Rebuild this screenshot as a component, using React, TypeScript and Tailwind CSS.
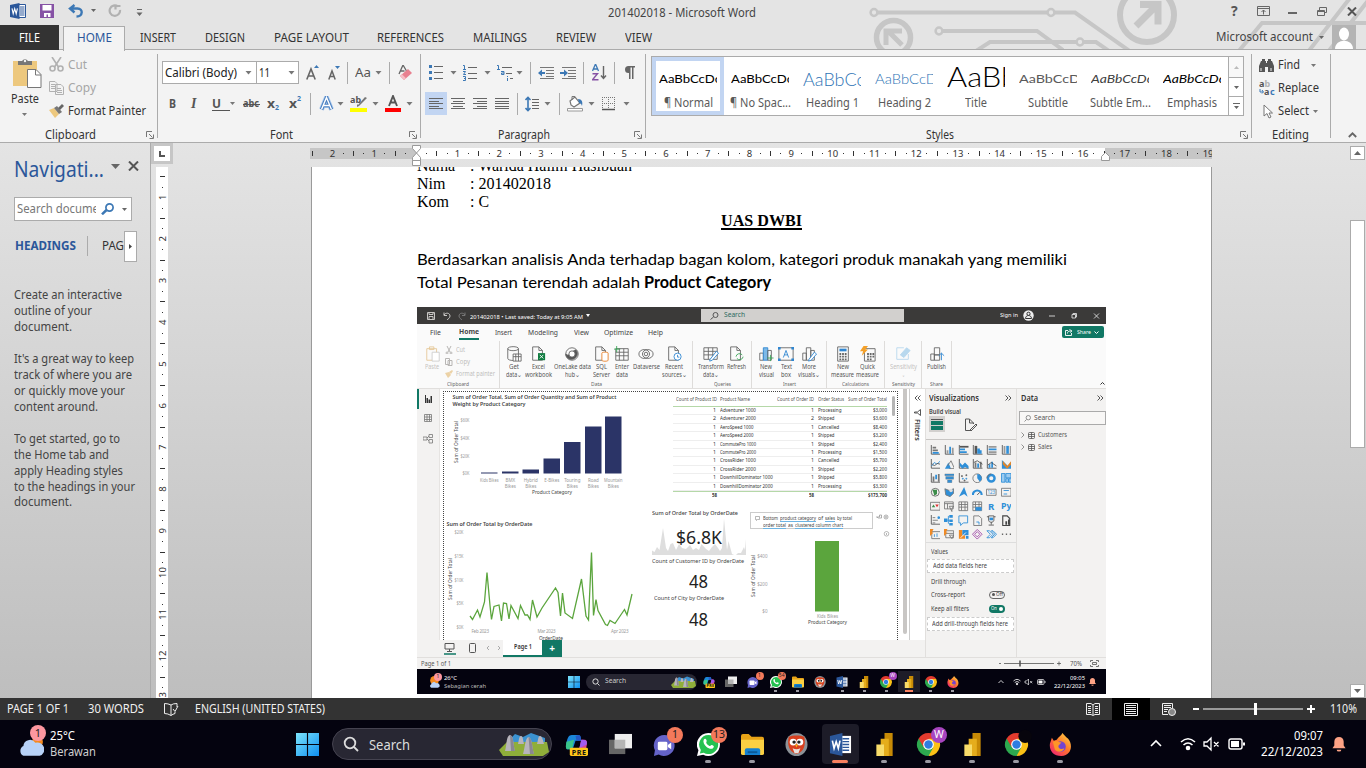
import { useLayoutEffect, useRef } from "react";
import type { ReactNode } from "react";

/* Text squeezed or stretched horizontally to a given advance width. */
function T({ w, className = "", children }: { w: number; className?: string; children: ReactNode }) {
  const inner = useRef<HTMLSpanElement>(null);
  useLayoutEffect(() => {
    const el = inner.current;
    if (!el) return;
    el.style.transform = "none";
    const natural = el.getBoundingClientRect().width;
    if (natural > 0) el.style.transform = `scaleX(${w / natural})`;
  }, [w, children]);
  return (
    <span className={`inline-block shrink-0 whitespace-nowrap ${className}`} style={{ width: w }}>
      <span ref={inner} className="inline-block origin-left">
        {children}
      </span>
    </span>
  );
}

const Caret = ({ c = "#777" }: { c?: string }) => (
  <svg width="7" height="4" viewBox="0 0 7 4" className="shrink-0">
    <path d="M0.5 0h6L3.5 3.6z" fill={c} />
  </svg>
);
const Sep = () => <div className="h-[22px] w-px bg-[#ababab]" />;

/* ---------- Title bar and tabs ---------- */

function Circuit() {
  return (
    <svg className="absolute left-[866px] top-0" width="500" height="49" viewBox="866 0 500 49" fill="none" stroke="#c6c6c6" strokeWidth="4">
      <circle cx="874" cy="12.5" r="3.4" strokeWidth="2.5" />
      <path d="M878 12.5h169M1055 12.5h20L1131 52" />
      <circle cx="1051" cy="12.5" r="3.4" strokeWidth="2.5" />
      <circle cx="939" cy="31" r="3.4" strokeWidth="2.5" />
      <path d="M943 31h94l26 19M976 51l14-9h86M1084 42h12l13 9" />
      <circle cx="1080" cy="42" r="3.4" strokeWidth="2.5" />
      <circle cx="893.5" cy="37.5" r="17" strokeWidth="5.5" />
      <path d="M902 45l-14-14M886 45V31h16" strokeWidth="5" />
      <circle cx="1147" cy="15" r="27" strokeWidth="6" />
      <path d="M1136 26l20-20M1140 4.5h18v20" strokeWidth="7" />
      <path d="M1238 52l24-29h104M1308 52l42-54M1328 52l42-54" />
    </svg>
  );
}

function WordLogo({ size }: { size: number }) {
  return (
    <svg width={size} height={size} viewBox="0 0 16 16">
      <path d="M8 1.5h7.500v13H8z" fill="#fff" stroke="#2b579a" strokeWidth="1" />
      <path d="M10 4h4.5M10 6h4.5M10 8h4.5M10 10h4.5M10 12h4.5" stroke="#2b579a" strokeWidth="1" />
      <path d="M0 2l9.5-2v16L0 14z" fill="#2b579a" />
      <path d="M2 5.3l1.2 5.4 1.5-5 1.5 5 1.2-5.4" stroke="#fff" strokeWidth="1.1" fill="none" />
    </svg>
  );
}

function TitleBar() {
  return (
    <div className="flex h-[25px] items-center">
      <div className="ml-[10px] flex w-[30px] pb-[3px]"><WordLogo size={16} /></div>
      <div className="flex w-[28px] pb-[3px]">
        <svg width="14" height="14" viewBox="0 0 14 14"><path d="M0 0h14v14H0z" fill="#8652a5" /><path d="M2.5 1h9v5.5h-9zM4 9h6.5v4H8v-2.500H6.500V13H4z" fill="#fff" /></svg>
      </div>
      <div className="flex w-[23px] pb-[3px]">
        <svg width="16" height="14" viewBox="0 0 16 14" fill="none" stroke="#3c78b5" strokeWidth="2.4"><path d="M6.500 1L2 4.500l4.500 4M2 4.500h7.500c6 0 5.500 8-1 8" /></svg>
      </div>
      <div className="w-[17px] pb-[5px]"><svg width="5" height="3"><path d="M0 0h5L2.500 3z" fill="#666" /></svg></div>
      <div className="flex w-[28px] pb-[3px]">
        <svg width="14" height="14" viewBox="0 0 14 14" fill="none" stroke="#b1b1b1" strokeWidth="2.200"><path d="M10 2.500A5.200 5.200 0 1 0 12 6M7.500 1v4.500M8 2h4.500" /></svg>
      </div>
      <svg width="7" height="7" viewBox="0 0 7 7"><path d="M1 0h5v1H1zM0.500 3.500h6L3.500 7z" fill="#666" /></svg>
      <div className="ml-[465px] text-[12px] text-[#444]"><T w={148}>201402018 - Microsoft Word</T></div>
      <div className="ml-[475px] flex items-center pb-[3px]">
        <div className="w-[26px] text-[14px] font-bold leading-none text-[#555]">?</div>
        <svg className="mr-[18px]" width="13" height="10" viewBox="0 0 13 10" fill="none" stroke="#666"><path d="M.5.5h12v9H.5zM.5 2.500h12M6.500 8.500V4M4.500 6l2-2 2 2" /></svg>
        <div className="mr-[20px] mt-[3px] h-[2px] w-[9px] bg-[#666]" />
        <svg className="mr-[20px]" width="10" height="9" viewBox="0 0 10 9" fill="none" stroke="#666"><path d="M.5 3.500h7v5h-7zM2.500 3V.5h7v5H8M.5 4.500h7" /></svg>
        <svg width="10" height="9" viewBox="0 0 10 9" stroke="#555" strokeWidth="2"><path d="M1 .5l8 8M9 .5l-8 8" /></svg>
      </div>
    </div>
  );
}

const ribbonTabs: [string, number, string][] = [
  ["INSERT", 36, "ml-[15px] pt-px"],
  ["DESIGN", 40, "ml-[29px] pt-px"],
  ["PAGE LAYOUT", 75, "ml-[29px] pt-px"],
  ["REFERENCES", 67, "ml-[28px] pt-px"],
  ["MAILINGS", 54, "ml-[29px] pt-px"],
  ["REVIEW", 40, "ml-[29px] pt-px"],
  ["VIEW", 27, "ml-[29px] pt-px"],
];

function Tabs() {
  return (
    <div className="flex h-[25px] items-center border-b border-[#ababab] text-[12px] text-[#333]">
      <div className="flex h-[25px] w-[59px] items-center justify-center bg-[#333] pt-px text-white"><T w={21}>FILE</T></div>
      <div className="relative top-px ml-[4px] flex h-[25px] w-[62px] items-center justify-center border border-b-0 border-[#ababab] bg-[#f3f3f3] text-[#2b579a]"><T w={35} className="-mt-px">HOME</T></div>
      {ribbonTabs.map(([label, w, m]) => <div key={label} className={m}><T w={w}>{label}</T></div>)}
      <div className="ml-[564px] mr-[6px] text-[#444]"><T w={97}>Microsoft account</T></div>
      <svg width="5" height="3"><path d="M0 0h5L2.500 3z" fill="#666" /></svg>
      <svg className="ml-[8px]" width="24" height="24" viewBox="0 0 24 24"><path d="M0 0h24v24H0z" fill="#b4b4b4" /><ellipse cx="12" cy="9" rx="5" ry="6.500" fill="#fff" /><path d="M3 24c0-11 18-11 18 0z" fill="#fff" /></svg>
    </div>
  );
}

/* ---------- Ribbon ---------- */

function Launcher() {
  return (
    <svg width="8" height="8" viewBox="0 0 8 8" fill="none" stroke="#777"><path d="M.5 6V.5H6M3 3l3.500 3.500M7.500 3.500v4h-4" /></svg>
  );
}

function Group({ width, label, lw, pad, launcher, children }: { width: string; label: string; lw: number; pad: string; launcher?: boolean; children: ReactNode }) {
  return (
    <div className={`flex h-[92px] shrink-0 ${width}`}>
      <div className="flex min-w-0 grow flex-col">
        <div className="h-[76px]">{children}</div>
        <div className="flex h-[16px] items-center text-[12px] text-[#333]">
          <div className={`${pad} grow pt-px`}><T w={lw}>{label}</T></div>
          {launcher && <div className="mr-[3px] mt-[2px]"><Launcher /></div>}
        </div>
      </div>
      <div className="mt-[4px] h-[84px] w-px bg-[#ababab]" />
    </div>
  );
}

function Clipboard() {
  return (
    <Group width="w-[158px]" label="Clipboard" lw={51} pad="pl-[45px]" launcher>
      <div className="flex">
        <div className="flex w-[49px] flex-col items-start pt-[8px]">
          <svg className="ml-[13px]" width="29" height="31" viewBox="0 0 29 31">
            <path d="M0 3h24v25H0z" fill="#edc87e" /><path d="M5 3h4a3.500 3.500 0 0 1 6 0h4v4H5z" fill="#777" /><circle cx="12" cy="3" r="1.200" fill="#f3f3f3" />
            <path d="M14.500 11.500h8.500l5 5v13H14.500z" fill="#fff" stroke="#777" /><path d="M22.500 11.500v5.500H28" fill="none" stroke="#777" />
          </svg>
          <div className="ml-[11px] mt-px text-[12px] leading-[18px] text-[#333]"><T w={28}>Paste</T></div>
          <svg className="ml-[22px] mt-[5px]" width="5" height="3"><path d="M0 0h5L2.500 3z" fill="#777" /></svg>
        </div>
        <div className="pt-[3px] text-[12px] text-[#a6a6a6]">
          <div className="flex h-[23px] items-center">
            <svg className="mr-[4px]" width="15" height="15" viewBox="0 0 15 15" fill="none" stroke="#b1b1b1" strokeWidth="1.600"><path d="M3 0l6.500 10M12 0L5.500 10" /><circle cx="3.500" cy="11.500" r="2.500" /><circle cx="11.500" cy="11.500" r="2.500" /></svg>
            <T w={19}>Cut</T>
          </div>
          <div className="flex h-[23px] items-center">
            <svg className="mr-[4px]" width="15" height="14" viewBox="0 0 15 14" fill="#f3f3f3" stroke="#b1b1b1"><path d="M.5.5H6l2 2v8H.5zM2 3.500h4M2 5.500h4M2 7.500h4M6.500 3.500H12l2.500 2.500v7.500h-8zM8 7.500h4M8 9.500h5M8 11.500h5" /></svg>
            <T w={28}>Copy</T>
          </div>
          <div className="flex h-[23px] items-center text-[#333]">
            <svg className="mr-[4px]" width="15" height="14" viewBox="0 0 15 14"><path d="M0 6l5-2 5 6-4 4z" fill="#edc87e" /><path d="M5 4l3-2 5 6-3 2z" fill="#777" /><path d="M9 4l4-4 2 2-4 4z" fill="#666" /></svg>
            <T w={78}>Format Painter</T>
          </div>
        </div>
      </div>
    </Group>
  );
}

function FontGroup() {
  return (
    <Group width="w-[263px]" label="Font" lw={23} pad="pl-[112px]" launcher>
      <div className="pt-[11px] text-[#555]">
        <div className="ml-[4px] grid h-[23px] grid-cols-[94px_50px_22px_19px_8px_20px_14px_8px_16px] items-center">
          <div className="flex h-[23px] w-[95px] items-center justify-between border border-[#ababab] bg-white pl-[2px] pr-[4px] text-[12px] text-[#222]"><T w={72}>Calibri (Body)</T><Caret /></div>
          <div className="flex h-[23px] w-[43px] items-center justify-between border border-[#ababab] bg-white pl-[2px] pr-[3px] text-[12px] text-[#222]"><T w={11}>11</T><Caret /></div>
          <svg width="14" height="16" viewBox="0 0 14 16"><path d="M.8 14.500L5 4l4.200 10.500M2.300 11h5.400" fill="none" stroke="#666" strokeWidth="1.600" /><path d="M8 3h5l-2.500-3z" fill="#3c78b5" /></svg>
          <svg width="13" height="16" viewBox="0 0 13 16"><path d="M.8 14.500L4 6l3.200 8.500M2 11.500h4" fill="none" stroke="#666" strokeWidth="1.500" /><path d="M7 1h5L9.500 4z" fill="#3c78b5" /></svg>
          <Sep />
          <div className="text-[13px]"><T w={16}>Aa</T></div>
          <Caret />
          <Sep />
          <svg width="16" height="16" viewBox="0 0 16 16"><path d="M2 9L6 0l3.500 6M3.500 6h4" fill="none" stroke="#666" strokeWidth="1.300" /><path d="M3 11l8-7 4 4-8 7z" fill="#e8808f" /><path d="M3 11l2-1.700 4 4L7 15z" fill="#f6bcc4" /></svg>
        </div>
        <div className="ml-[11px] mt-[8px] grid h-[23px] grid-cols-[22px_21px_18px_13px_24px_22px_21px_9px_18px_13px_22px_13px_21px_8px] items-center text-[13px] font-bold">
          <T w={7}>B</T>
          <span className="font-['Liberation_Serif'] text-[14px] italic">I</span>
          <span className="border-b border-[#555] pb-px leading-[12px]"><T w={9}>U</T></span>
          <svg width="5" height="3"><path d="M0 0h5L2.500 3z" fill="#777" /></svg>
          <span className="relative text-[11px]"><T w={16}>abc</T><span className="absolute left-0 top-[9px] h-px w-[17px] bg-[#555]" /></span>
          <span className="flex items-end"><T w={8}>x</T><span className="text-[7px] leading-[10px] text-[#3c78b5]">2</span></span>
          <span className="flex items-start"><T w={8}>x</T><span className="text-[7px] leading-[10px] text-[#3c78b5]">2</span></span>
          <Sep />
          <svg width="15" height="15" viewBox="0 0 15 15"><path d="M2.500 13.500L7.500 1.500 12.500 13.500M4.500 9.500h6" fill="none" stroke="#a9c8ec" strokeWidth="5" /><path d="M2.500 13.500L7.500 1.500 12.500 13.500M4.500 9.500h6" fill="none" stroke="#4a7fc0" strokeWidth="3.400" /><path d="M2.500 13.500L7.500 1.500 12.500 13.500M4.500 9.500h6" fill="none" stroke="#fff" strokeWidth="1.400" /></svg>
          <Caret />
          <svg width="18" height="17" viewBox="0 0 18 17"><text x="0" y="8" fontSize="9" fontWeight="700" fill="#555" fontFamily="Noto Sans">ab</text><path d="M8 10l7-8 2 1-8 8zM7 9l2 2-2 1z" fill="#777" /><path d="M0 13h17v4H0z" fill="#ff0" /></svg>
          <Caret />
          <svg width="16" height="17" viewBox="0 0 16 17"><path d="M4 11L8 1l4 10M5.500 7.500h5" fill="none" stroke="#555" strokeWidth="1.900" /><path d="M0 13h16v4H0z" fill="#f00" /></svg>
          <Caret />
        </div>
      </div>
    </Group>
  );
}

function Lines({ mode }: { mode: "l" | "c" | "r" | "j" }) {
  const short = mode === "j" ? 14 : 10;
  const x = mode === "c" ? 2 : mode === "r" ? 4 : 0;
  return (
    <svg width="14" height="11" viewBox="0 0 14 11" fill="#666" shapeRendering="crispEdges">
      <path d="M0 0h14v1H0zM0 5h14v1H0z" />
      <rect x={x} y="2.500" width={short} height="1" />
      <rect x={x} y="7.500" width={short} height="1" />
      <rect x="0" y="10" width="14" height="1" />
    </svg>
  );
}

function Indent({ flip }: { flip?: boolean }) {
  return (
    <svg width="16" height="12" viewBox="0 0 16 12">
      <path d="M2 .5h14M8 3.500h8M8 6.500h8M8 9.500h8M2 11.500h14" stroke="#777" />
      <path d={flip ? "M0 5h4V2.500L8 6 4 9.500V7H0z" : "M7 5H4V2.500L0 6l4 3.500V7h3z"} fill="#3c78b5" />
    </svg>
  );
}

function Paragraph() {
  return (
    <Group width="w-[225px]" label="Paragraph" lw={52} pad="pl-[77px]" launcher>
      <div className="pt-[11px] text-[#555]">
        <div className="ml-[8px] grid h-[23px] grid-cols-[21px_13px_21px_13px_19px_14px_8px_22px_23px_9px_22px_10px_12px] items-center">
          <svg width="14" height="15" viewBox="0 0 14 15"><path d="M0 0h3v3H0zM0 6h3v3H0zM0 12h3v3H0z" fill="#3c78b5" /><path d="M5 1.500h9M5 7.500h9M5 13.500h9" stroke="#666" /></svg>
          <Caret />
          <svg width="15" height="16" viewBox="0 0 15 16"><path d="M0 .5h1.500V4M0 4.500h3M0 6.500h2.500L.5 9.500H3M0 11.500h2.500v2H1h1.500v2H0" stroke="#3c78b5" fill="none" /><path d="M5 2.500h9M5 8.500h9M5 13.500h9" stroke="#666" /></svg>
          <Caret />
          <svg width="16" height="16" viewBox="0 0 16 16"><path d="M0 .5h1.500V4M0 4.500h3M4 6.500h3v3H4.500v-1.500H7M10.500 11v1M10.500 13v3" stroke="#3c78b5" fill="none" /><path d="M5 2.500h10M9 8.500h6M13 13.500h3" stroke="#666" /></svg>
          <Caret />
          <Sep />
          <Indent />
          <Indent flip />
          <Sep />
          <svg width="15" height="17" viewBox="0 0 15 17" fill="none"><path d="M.5 7L3.500 0l3 7M1.500 5h4" stroke="#3c78b5" strokeWidth="1.300" /><path d="M.5 9.700h5l-5 6h6" stroke="#8652a5" strokeWidth="1.400" /><path d="M11.500 2v12M9 11.500l2.500 3 2.500-3" stroke="#666" strokeWidth="1.400" /></svg>
          <Sep />
          <svg width="11" height="13" viewBox="0 0 11 13"><path d="M4.500 7A3.500 3.500 0 0 1 4.500 0H11v1.500H9.500V13H8V1.500H6.500V13H5V7z" fill="#666" /></svg>
        </div>
        <div className="ml-[4px] mt-[8px] grid h-[23px] grid-cols-[26px_22px_22px_22px_8px_19px_15px_8px_21px_14px_21px_8px] items-center">
          <div className="flex h-[23px] w-[22px] items-center justify-center bg-[#c2d5f2]"><Lines mode="l" /></div>
          <Lines mode="c" />
          <Lines mode="r" />
          <Lines mode="j" />
          <Sep />
          <svg width="15" height="16" viewBox="0 0 15 16"><path d="M3 1.500v13M.5 4L3 1.500 5.500 4M.5 12L3 14.500 5.500 12" fill="none" stroke="#3c78b5" strokeWidth="1.600" /><path d="M7 3.500h7M7 6.500h7M7 9.500h7M7 12.500h7" stroke="#666" /></svg>
          <Caret />
          <Sep />
          <svg width="17" height="17" viewBox="0 0 17 17"><path d="M3 6l5-4 5 6-6 4-3-2z" fill="#fff" stroke="#777" strokeWidth="1.200" /><path d="M5 5V1.500h3" fill="none" stroke="#777" /><path d="M11 4c4 0 5 3 4 7-1-3-2-3-3-3z" fill="#3c78b5" /><path d="M.5 13.500h15v2.500H.5z" fill="#fff" stroke="#999" /></svg>
          <Caret />
          <svg width="14" height="14" viewBox="0 0 14 14"><path d="M.5 0v12M6.500 0v12M12.500 0v12M0 .5h13M0 6.500h13" stroke="#777" strokeDasharray="1 1" /><path d="M0 12.500h13" stroke="#555" strokeWidth="1.500" /></svg>
          <Caret />
        </div>
      </div>
    </Group>
  );
}

const styleCells: { t: string; tw: number; c: string; label: string; lw: number }[] = [
  { t: "AaBbCcDc", tw: 62, c: "text-[11.5px] text-black", label: "¶ Normal", lw: 49 },
  { t: "AaBbCcDc", tw: 62, c: "text-[11.5px] text-black", label: "¶ No Spac...", lw: 61 },
  { t: "AaBbCc", tw: 62, c: "text-[17px] font-light text-[#2e74b5]", label: "Heading 1", lw: 53 },
  { t: "AaBbCcD", tw: 62, c: "text-[14px] font-light text-[#2e74b5]", label: "Heading 2", lw: 53 },
  { t: "AaBb", tw: 71, c: "text-[28px] font-light text-black", label: "Title", lw: 22 },
  { t: "AaBbCcD", tw: 61, c: "text-[12px] text-[#5a5a5a]", label: "Subtitle", lw: 40 },
  { t: "AaBbCcDc", tw: 62, c: "text-[12px] italic text-[#404040]", label: "Subtle Em...", lw: 61 },
  { t: "AaBbCcDc", tw: 62, c: "text-[12px] italic text-black", label: "Emphasis", lw: 50 },
];

function Styles() {
  return (
    <Group width="w-[606px]" label="Styles" lw={28} pad="pl-[280px]" launcher>
      <div className="pl-[5px] pt-[6px]">
        <div className="flex h-[60px] w-[593px] border border-[#ababab] bg-white">
          {styleCells.map((s, i) => (
            <div key={s.label} className={`flex h-[58px] w-[72px] shrink-0 flex-col items-center border-4 ${i === 0 ? "border-[#c2d5f2]" : "border-transparent"}`}>
              <div className={`flex h-[34px] w-[58px] shrink-0 items-center overflow-hidden font-[Lato] ${s.label === "Title" ? "pb-[4px]" : "pt-[2px]"}`}><T w={s.tw} className={`leading-none ${s.c}`}>{s.t}</T></div>
              <div className="flex h-[16px] shrink-0 items-center text-[12px] leading-[16px] text-[#5a5a5a]"><T w={s.lw}>{s.label}</T></div>
            </div>
          ))}
          <div className="ml-auto grid w-[15px] grid-rows-[20px_19px_19px] border-l border-[#ababab]">
            <div className="flex items-center justify-center bg-[#f8f8f8]"><svg width="5" height="3"><path d="M0 3h5L2.500 0z" fill="#bbb" /></svg></div>
            <div className="flex items-center justify-center border-t border-[#ababab]"><svg width="5" height="3"><path d="M0 0h5L2.500 3z" fill="#666" /></svg></div>
            <div className="flex items-center justify-center border-t border-[#ababab]"><svg width="7" height="7"><path d="M0 0h7v1H0zM1 3h5L3.500 6z" fill="#666" /></svg></div>
          </div>
        </div>
      </div>
    </Group>
  );
}

function Editing() {
  return (
    <Group width="w-[79px]" label="Editing" lw={37} pad="pl-[20px]">
      <div className="pl-[7px] pt-[4px] text-[12px] text-[#333]">
        <div className="flex h-[22px] items-center">
          <svg className="mr-[4px]" width="15" height="13" viewBox="0 0 15 13" fill="#555"><path d="M2 2h1V0h3v2h1v2h1V2h1V0h3v2h1l2 5v6H9V8H6v5H0V7z" /><path d="M2 9v3M12 9v3" stroke="#f3f3f3" /></svg>
          <T w={22}>Find</T><svg className="ml-[11px]" width="5" height="3"><path d="M0 0h5L2.500 3z" fill="#777" /></svg>
        </div>
        <div className="flex h-[24px] items-center">
          <svg className="mr-[2px]" width="17" height="16" viewBox="0 0 17 16" fontFamily="Noto Sans" fontWeight="700" fontSize="9"><text x="0" y="7" fill="#555">a</text><text x="5.500" y="7" fill="#b1b1b1">b</text><text x="5" y="14.500" fill="#555">a</text><text x="11" y="14.500" fill="#3c78b5">c</text><path d="M1 9v3h3M3 10l1.500 2L3 13.500" fill="none" stroke="#3c78b5" /></svg>
          <T w={41}>Replace</T>
        </div>
        <div className="flex h-[22px] items-center">
          <svg className="ml-[4px] mr-[5px]" width="10" height="15" viewBox="0 0 10 15"><path d="M1 1v11l3-2.500 2 4.500 2-1-2-4h3.500z" fill="#fff" stroke="#777" /></svg>
          <T w={31}>Select</T><svg className="ml-[4px]" width="5" height="3"><path d="M0 0h5L2.500 3z" fill="#777" /></svg>
        </div>
      </div>
    </Group>
  );
}

/* ---------- Navigation pane and rulers ---------- */

const navText: [string, number][][] = [
  [["Create an interactive", 108], ["outline of your", 78], ["document.", 58]],
  [["It's a great way to keep", 120], ["track of where you are", 118], ["or quickly move your", 111], ["content around.", 84]],
  [["To get started, go to", 106], ["the Home tab and", 95], ["apply Heading styles", 109], ["to the headings in your", 121], ["document.", 58]],
];

function NavPane() {
  return (
    <div className="flex h-full w-[151px] shrink-0 flex-col border-r border-[#ababab]">
      <div className="ml-[14px] mt-[11px] flex h-[32px] items-center text-[21px] text-[#2b579a]">
        <T w={90}>Navigati...</T>
        <svg className="mb-[8px] ml-[7px]" width="9" height="5"><path d="M0 0h9L4.500 5z" fill="#666" /></svg>
        <svg className="mb-[8px] ml-[8px]" width="11" height="10" viewBox="0 0 11 10" stroke="#555" strokeWidth="2"><path d="M1 .5l9 9M10 .5l-9 9" /></svg>
      </div>
      <div className="ml-[14px] mt-[11px] flex h-[24px] w-[118px] items-center border border-[#ababab] bg-white pl-[2px] text-[12px] text-[#777]">
        <div className="w-[79px] overflow-hidden"><T w={82}>Search docume</T></div>
        <svg className="ml-[5px]" width="13" height="12" viewBox="0 0 13 12" fill="none" stroke="#3c78b5"><circle cx="8.500" cy="4.500" r="3.600" strokeWidth="1.700" /><path d="M5.500 7L1 11.300" strokeWidth="2.500" /></svg>
        <svg className="ml-[8px]" width="5" height="3"><path d="M0 0h5L2.500 3z" fill="#666" /></svg>
      </div>
      <div className="mt-[10px] flex h-[30px] items-center pl-[15px] text-[12px]">
        <T w={61} className="font-bold text-[#2b579a]">HEADINGS</T>
        <div className="ml-[11px] h-[20px] w-px bg-[#ababab]" />
        <div className="ml-[14px] w-[22px] overflow-hidden text-[#333]"><T w={22}>PAG</T></div>
        <div className="mt-px flex h-[31px] w-[13px] items-center justify-center border border-[#ababab] bg-white"><svg width="3" height="5"><path d="M0 0v5l3-2.500z" fill="#444" /></svg></div>
      </div>
      <div className="ml-[14px] mt-[26px] flex flex-col gap-[16px] text-[12px] leading-[15.950px] text-[#444]">
        {navText.map((p, i) => (
          <div key={i} className="flex flex-col">{p.map(([t, w]) => <T key={t} w={w}>{t}</T>)}</div>
        ))}
      </div>
    </div>
  );
}

const range = (a: number, b: number) => Array.from({ length: b - a + 1 }, (_, i) => a + i);

function HRuler() {
  const u = 41.7;
  return (
    <svg width="902" height="22" viewBox="310 145 902 22" fontFamily="Noto Sans" fontSize="9.500" fill="#333" textAnchor="middle">
      <path d="M310 148h902v11H310z" fill="#c6c6c6" />
      <path d="M417 148h688v11H417z" fill="#fff" />
      {range(-2, 19).map((n) => (
        <g key={n}>
          {n !== 0 && <text x={415.800 + n * u} y="157">{Math.abs(n)}</text>}
          {n < 19 && <path d={`M${Math.round(415.600 + (n + 0.25) * u)} 153h1v1h-1zM${Math.round(415.600 + (n + 0.5) * u)} 151h1v5h-1zM${Math.round(415.600 + (n + 0.75) * u)} 153h1v1h-1z`} />}
        </g>
      ))}
      <path d="M312 151h1v5h-1z" />
      <path d="M412.500 145.500h8v3l-4 4.500 4 4.500v3h-8v-3l4-4.500-4-4.500zM412.500 160.500h8v5h-8zM1101.500 160.500v-4l4-4 4 4v4z" fill="#fff" stroke="#999" />
    </svg>
  );
}

function VRuler() {
  const u = 41.7;
  return (
    <svg width="12" height="531" viewBox="156 167 12 531" fontFamily="Noto Sans" fontSize="9.500" fill="#333" textAnchor="middle">
      <path d="M156 167h12v531h-12z" fill="#fff" />
      {range(0, 13).map((n) => {
        const y = 155.500 + n * u;
        return (
          <g key={n}>
            {n > 0 && <text transform={`translate(165.500 ${y}) rotate(-90)`}>{n}</text>}
            <path d={`M162 ${Math.round(y + u / 4)}h1v1h-1zM160 ${Math.round(y + u / 2)}h5v1h-5zM162 ${Math.round(y + (u * 3) / 4)}h1v1h-1z`} />
          </g>
        );
      })}
    </svg>
  );
}

/* ---------- Taskbar icons ---------- */

const Win = () => <svg viewBox="0 0 24 24" className="size-full"><defs><linearGradient id="wn" x2="1" y2="1"><stop stopColor="#7ce4fb" /><stop offset="1" stopColor="#0f8ff0" /></linearGradient></defs><path d="M0 0h11.400v11.400H0zM12.600 0H24v11.400H12.600zM0 12.600h11.400V24H0zM12.600 12.600H24V24H12.600z" fill="url(#wn)" /></svg>;
const Copilot = () => <svg viewBox="0 0 24 24" className="size-full"><path d="M7 2h7c3 0 2 5 3 6h-6L8 17H3c-3 0-2-5-1-9 .8-3 2-6 5-6z" fill="#1b86d8" /><path d="M1.500 9l8-2-2 10H3c-3 0-2-5-1.500-8z" fill="#3ac48a" /><path d="M14 2c3 0 2.500 3.500 3 6h-5l-1-5z" fill="#2458c4" /><path d="M17 7h4c3 1 2 5 1 9-1 5-3 6-6 6h-5l4-6z" fill="#d6488f" /><path d="M17 7c5 0 6.500 1 5.500 5L15 16z" fill="#a25cf0" /><rect x="5" y="15.500" width="19" height="8.500" rx="1.500" fill="#ffc61a" /><text x="14.500" y="22.500" textAnchor="middle" fontSize="7.500" fontWeight="700" fontFamily="Noto Sans" textLength="15" fill="#111">PRE</text></svg>;
const TaskView = () => <svg viewBox="0 0 24 24" className="size-full"><path d="M0 7h17v15H0z" fill="#666" /><path d="M6 1h18v15H6z" fill="#eee" /><path d="M6 7h11v9H6z" fill="#b5b5b5" /></svg>;
const Chat = () => <svg viewBox="0 0 24 24" className="size-full"><path d="M12 2a11 11 0 1 1-6 20.500L1 24l1-6A11 11 0 0 1 12 2z" fill="#6563c8" /><rect x="5" y="9" width="10" height="9" rx="1.500" fill="#fff" /><path d="M15.500 12.500L19 10v7l-3.500-2.500z" fill="#fff" /></svg>;
const WhatsApp = () => <svg viewBox="0 0 24 24" className="size-full"><path d="M12 0a12 12 0 1 1-5.500 22.700L0 24l1.500-6A12 12 0 0 1 12 0z" fill="#fff" /><path d="M12 2a10 10 0 1 1-5 18.600L3 21.500l1-3.800A10 10 0 0 1 12 2z" fill="#25c251" /><path d="M7 7c1-2 2.500-1 3 .5s-1 2 0 3.500 2 2 3 2.500 1.500-1.500 2.500-1 2.500 1 2 2c-1 3-5 2-7.500 0S6 9.500 7 7z" fill="#fff" /></svg>;
const Explorer = () => <svg viewBox="0 0 24 24" className="size-full"><path d="M0 3q0-2 2-2h6l3 3h11q2 0 2 2v15H0z" fill="#e8a317" /><path d="M0 7h24v14q0 2-2 2H2q-2 0-2-2z" fill="#fbd043" /><path d="M4 23v-5q0-2 2-2h12q2 0 2 2v5z" fill="#1480d0" /><path d="M7 19h10v2H7z" fill="#0b5a9a" /></svg>;
const Owl = () => <svg viewBox="0 0 24 24" className="size-full"><ellipse cx="12" cy="12" rx="11.500" ry="12" fill="#8c9298" /><path d="M4 4c5-2 11-2 16 0 2 8 0 16-8 18C4 20 2 12 4 4z" fill="#d8401f" /><circle cx="8.500" cy="9.500" r="3.600" fill="#fff" /><circle cx="15.500" cy="9.500" r="3.600" fill="#fff" /><circle cx="9.500" cy="9.500" r="1.800" fill="#222" /><circle cx="14.500" cy="9.500" r="1.800" fill="#222" /><path d="M10.500 12h3L12 15z" fill="#f7b718" /><path d="M8 16q4 2 8 0l-2 5h-4z" fill="#e8e0dc" /></svg>;
const PowerBI = () => <svg viewBox="0 0 24 24" className="size-full"><path d="M12 0h8.500v24H12z" fill="#c78a06" /><path d="M8 6h8.500v18H8z" fill="#e5ad1c" /><path d="M3.500 12h8v12h-8z" fill="#f8dc6a" /></svg>;
const Chrome = ({ mark }: { mark?: boolean }) => <svg viewBox="0 0 24 24" className="size-full overflow-visible"><path d="M12 12L1.600 6A12 12 0 0 1 22.400 6z" fill="#e33b2e" /><path d="M12 12l10.400-6A12 12 0 0 1 12 24z" fill="#fbc116" /><path d="M12 12v12A12 12 0 0 1 1.600 6z" fill="#2da94f" /><path d="M12 6h10.400L17 15z" fill="#fbc116" /><path d="M1.600 6H13L7 15z" fill="#e33b2e" /><path d="M6.500 14.500L1.600 6l-1 9L12 24l5-9z" fill="#2da94f" /><circle cx="12" cy="12" r="5.600" fill="#fff" /><circle cx="12" cy="12" r="4.400" fill="#2f7de1" />{mark && <circle cx="21" cy="3.500" r="7" fill="#07050c" />}</svg>;
const Firefox = () => <svg viewBox="0 0 24 24" className="size-full"><defs><linearGradient id="ff" x1="1" x2="0.200" y2="1"><stop stopColor="#ffe14a" /><stop offset=".5" stopColor="#ff7a2a" /><stop offset="1" stopColor="#f0266f" /></linearGradient></defs><path d="M14 0c2 2 3 4 6 6 5 6 4 17-7 18C4 24 0 18 1 11l2-6 2 3 3-1c2-3 5-4 6-7z" fill="url(#ff)" /><circle cx="12" cy="14" r="5.500" fill="#7444d0" /><path d="M4 9c4-2 6 1 9 1l-3 3c-1 3 3 5 6 3-1 4-8 5-10 1z" fill="#ff9527" /></svg>;
const Hills = () => <svg viewBox="0 0 50 24" className="size-full"><path d="M10 8l6-6 8 3 8-4 14 5v12H8z" fill="#3b92d1" /><path d="M0 18l8-8h40l2 10-6 4H4z" fill="#8fae3a" /><path d="M6 19c2-7 1-15 5-16 4 1 3 10 5 16zM19 12c1-4 1-8 3-8s2 4 3 8zM24 22c2-6 2-16 5.500-17 4 1 3.500 11 5.500 17zM38 12c1-3 1-8 3-8s3 4 4 8z" fill="#b7b4bc" /><path d="M11 3c4 1 3 10 5 16h-4zM29.500 5c4 1 3.500 11 5.500 17h-4z" fill="#8a8792" /></svg>;
const Weather = ({ sun }: { sun?: boolean }) => <svg viewBox="0 0 24 24" className="size-full"><circle cx={sun ? 12 : 18} cy={sun ? 10 : 9} r={sun ? 8 : 5} fill="#f58a1f" /><path d="M5 22a5 5 0 0 1 0-9 6 6 0 0 1 11-3 6 6 0 0 1 4 12z" fill="#b8d2f7" transform={sun ? "translate(2 8) scale(.8 .7)" : undefined} /></svg>;
const WordTask = () => <svg viewBox="0 0 24 24" className="size-full"><path d="M11 3h12v18H11z" fill="#fff" /><path d="M14 6h7M14 9h7M14 12h7M14 15h7M14 18h7" stroke="#2b579a" strokeWidth="1.400" /><path d="M1 3l13-3v24L1 21z" fill="#2b579a" /><path d="M3.500 8l1.800 8 2.200-7 2.200 7 1.800-8" stroke="#fff" strokeWidth="1.700" fill="none" /></svg>;

type Item = { k: string; el: ReactNode; badge?: string; purple?: boolean; dot?: boolean; active?: boolean };
const items = (count: string, active: string): Item[] => [
  { k: "copilot", el: <Copilot /> },
  { k: "view", el: <TaskView /> },
  { k: "chat", el: <Chat />, badge: "1" },
  { k: "wa", el: <WhatsApp />, badge: count, dot: true },
  { k: "exp", el: <Explorer />, dot: true },
  { k: "owl", el: <Owl /> },
  { k: "word", el: <WordTask />, dot: true, active: active === "word" },
  { k: "pbi", el: <PowerBI />, dot: true },
  { k: "chrome", el: <Chrome />, badge: "W", purple: true, dot: true },
  { k: "pbi2", el: <PowerBI />, dot: true, active: active === "pbi2" },
  { k: "chrome2", el: <Chrome mark={active === "word"} />, dot: true },
  { k: "ff", el: <Firefox />, dot: true },
];

function Tray() {
  return (
    <svg viewBox="0 0 96 20" className="size-full" fill="none" stroke="#fff" strokeWidth="1.600">
      <path d="M1 12l5-5 5 5" />
      <path d="M31 8q7-6.500 14 0M33.500 11q4.500-4 9 0" /><circle cx="38" cy="14" r="1.500" fill="#fff" />
      <path d="M54 8h3l4-4v12l-4-4h-3zM64 8l4.500 4.500M68.500 8L64 12.500" strokeWidth="1.300" />
      <rect x="79" y="5" width="13" height="10" rx="2" strokeWidth="1.400" /><path d="M81 7h8v6h-8z" fill="#fff" stroke="none" /><path d="M94 8.500v3" strokeWidth="2" />
    </svg>
  );
}

function Bell() {
  return <svg viewBox="0 0 14 16" className="size-full" fill="#fda285"><path d="M7 0c3 0 5 2 5 5v4l2 3H0l2-3V5c0-3 2-5 5-5zM4.500 13.500h5a2.500 2 0 0 1-5 0z" /></svg>;
}

function Taskbar() {
  return (
    <div className="flex h-[48px] items-center bg-[#04030f] text-white">
      <div className="relative ml-[18px] mt-[2px] size-[26px]">
        <Weather />
        <div className="absolute -top-[7px] left-[12px] flex size-[16px] items-center justify-center rounded-full bg-[#fd97a0] text-[11px] text-[#222]">1</div>
      </div>
      <div className="ml-[6px] flex flex-col text-[12px] leading-[16px]">
        <T w={25}>25°C</T><T w={46} className="text-[#cfcfcf]">Berawan</T>
      </div>
      <div className="ml-[200px] size-[23px]"><Win /></div>
      <div className="ml-[13px] flex h-[32px] w-[220px] items-center rounded-full border border-[#454350] bg-[#282733]">
        <svg className="ml-[10px]" width="16" height="16" viewBox="0 0 16 16" fill="none" stroke="#ddd" strokeWidth="1.800"><circle cx="7" cy="7" r="5.300" /><path d="M11 11l4 4" /></svg>
        <div className="ml-[10px] text-[14px] text-[#ddd]"><T w={41}>Search</T></div>
        <div className="ml-auto mr-[2px] h-[24px] w-[50px]"><Hills /></div>
      </div>
      <div className="ml-[2px] flex">
        {items("13", "word").map((it) => (
          <div key={it.k} className="relative flex h-[40px] w-[44px] justify-center">
            <div className={`flex h-[40px] w-[37px] flex-col items-center pt-[9px] ${it.active ? "rounded bg-[#1d1c28]" : ""}`}>
              <div className="size-[23px]">{it.el}</div>
              {it.active ? <div className="mt-[4px] h-[3px] w-[16px] rounded bg-[#f9805f]" /> : it.dot && <div className="mt-[4px] h-[3px] w-[6px] rounded bg-[#9a99a2]" />}
            </div>
            {it.badge && <div className={`absolute right-[3px] top-[3px] flex h-[16px] min-w-[16px] items-center justify-center rounded-full text-[10.500px] ${it.purple ? "bg-[#a845c0] text-white" : "bg-[#f4795b] text-[#222]"}`}>{it.badge}</div>}
          </div>
        ))}
      </div>
      <div className="ml-[68px] h-[20px] w-[96px]"><Tray /></div>
      <div className="ml-[15px] flex w-[62px] flex-col items-end text-[12px] leading-[16px]"><T w={29}>09:07</T><T w={62}>22/12/2023</T></div>
      <div className="ml-[9px] h-[15px] w-[14px]"><Bell /></div>
    </div>
  );
}

function MiniTaskbar() {
  return (
    <div className="flex h-[25px] items-center bg-[#04030f] text-white">
      <div className="relative ml-[11px] size-[13px]">
        <Weather sun />
        <div className="absolute -top-[2px] left-[6px] flex size-[8px] items-center justify-center rounded-full bg-[#fd97a0] text-[5px] text-[#222]">1</div>
      </div>
      <div className="ml-[3px] flex flex-col text-[6px] leading-[8px]"><T w={13}>26°C</T><T w={42} className="text-[#bbb]">Sebagian cerah</T></div>
      <div className="ml-[82px] size-[12px]"><Win /></div>
      <div className="ml-[6px] flex h-[16px] w-[111px] items-center rounded-full bg-[#282733]">
        <svg className="ml-[6px]" width="8" height="8" viewBox="0 0 16 16" fill="none" stroke="#ddd" strokeWidth="2"><circle cx="7" cy="7" r="5.300" /><path d="M11 11l4 4" /></svg>
        <div className="ml-[5px] text-[7px] text-[#ccc]"><T w={21}>Search</T></div>
        <div className="ml-auto mr-px h-[12px] w-[25px]"><Hills /></div>
      </div>
      <div className="ml-[1px] flex">
        {items("54", "pbi2").map((it) => (
          <div key={it.k} className={`relative flex h-[21px] w-[22.180px] flex-col items-center pt-[5px] ${it.active ? "bg-[#1d1c28]" : ""}`}>
            <div className="size-[12px]">{it.el}</div>
            {it.active ? <div className="mt-[2px] h-[1.500px] w-[8px] bg-[#f9805f]" /> : it.dot && <div className="mt-[2px] h-[1.500px] w-[3px] bg-[#9a99a2]" />}
            {it.badge && <div className={`absolute right-[1px] top-[1px] flex h-[8px] min-w-[8px] items-center justify-center rounded-full text-[5px] ${it.purple ? "bg-[#a845c0] text-white" : "bg-[#f4795b] text-[#222]"}`}>{it.badge}</div>}
          </div>
        ))}
      </div>
      <div className="ml-[34px] h-[10px] w-[48px]"><Tray /></div>
      <div className="ml-[8px] flex w-[31px] flex-col items-end text-[6px] leading-[8px]"><T w={15}>09:05</T><T w={31}>22/12/2023</T></div>
      <div className="ml-[4px] h-[8px] w-[7px]"><Bell /></div>
    </div>
  );
}

/* ---------- Embedded report window ---------- */

const cyl = "M2 3c0-3 12-3 12 0v11c0 3-12 3-12 0zM2 3c0 3 12 3 12 0";
const doc = "M3 1h7l4 4v11H3zM10 1v4h4";
const icons: Record<string, ReactNode> = {
  get: <><path d={cyl} /><path d="M8 9h9v8H8zM8 12h9M11 9v8M14 9v8" fill="#fff" /></>,
  excel: <><path d={doc} /><path d="M9 8h8v8H9z" fill="#107c41" stroke="none" /><path d="M11 10l4 4M15 10l-4 4" stroke="#fff" /></>,
  lake: <><circle cx="9" cy="9" r="7" /><path d="M2 9c4 5 9-7 12-4 3 5-1 10-6 10-4 0-6-3-6-6z" fill="#555" /><circle cx="9" cy="9" r="3.500" fill="#fff" /></>,
  sql: <><path d={doc} /><path d="M10 8c0-1.500 7-1.500 7 0v8c0 1.500-7 1.500-7 0z" stroke="#e8812a" fill="#fff" /></>,
  enter: <><path d="M2 3h14v13H2zM2 7h14M2 11h14M6 3v13M11 3v13" /><path d="M3 0v7M0 3.500h7" stroke="#3aa757" /></>,
  verse: <><ellipse cx="7" cy="9" rx="6" ry="5" /><ellipse cx="11" cy="9" rx="6" ry="5" /><circle cx="9" cy="9" r="2" /></>,
  recent: <><path d={doc} /><circle cx="13" cy="12" r="4" stroke="#2f86d1" fill="#fff" /><path d="M13 10v2.500h2" stroke="#2f86d1" /></>,
  trans: <><path d="M1 2h15v13H1zM1 6h15M1 10h15M6 2v13M11 2v13" /><path d="M8 15l7-9 2.500 2-7 8-3 1z" stroke="#2f86d1" fill="#fff" /></>,
  refresh: <><path d={doc} /><path d="M9 12a4 4 0 0 1 7-2M17 12a4 4 0 0 1-7 2" stroke="#3aa757" /></>,
  nv: <><path d="M2 8h4v8H2z" /><path d="M6 2h5v14H6z" fill="#7cb9e8" stroke="#2f86d1" /><path d="M11 5h4v11h-4z" /><path d="M14 10v7M10.500 13.500h7" stroke="#3aa757" /></>,
  tb: <><path d="M1 2h16v14H1z" /><path d="M0 1h3v3H0zM15 1h3v3h-3zM0 14h3v3H0zM15 14h3v3h-3z" fill="#2f86d1" stroke="none" /><path d="M6 13l3-8 3 8M7 10h4" stroke="#2f86d1" /></>,
  more: <><path d="M2 8h4v8H2zM6 2h5v14H6zM11 5h4v11h-4z" /><path d="M9 15l6-8 2.500 2-6 7-3 1z" stroke="#2f86d1" fill="#fff" /></>,
  calc: <><path d="M3 1h12v16H3z" /><path d="M5 3h8v3H5z" fill="#2f86d1" stroke="none" /><path d="M5 9h2M8 9h2M11 9h2M5 12h2M8 12h2M11 12h2M5 15h2M8 15h2M11 15h2" strokeWidth="2" /></>,
  quick: <><path d="M5 3h12v14H5z" /><path d="M8 9h2M11 9h2M14 9h2M8 12h2M11 12h2M14 12h2M8 15h2M11 15h2" strokeWidth="2" /><path d="M4 0h5L6 4h3L2 11l1.500-5H0z" fill="#f4a028" stroke="none" /></>,
  sens: <><path d="M2 2h8M2 2v13h13v-6" stroke="#b8d8ee" /><path d="M6 10l7-8 4 3-7 8z" fill="#b8d8ee" stroke="#b8d8ee" /></>,
  pub: <><path d="M2 9h4v7H2zM6 2h6v8H6zM6 10h6v6H6z" /><path d="M14 16V8M11 11l3-3 3 3" stroke="#2f86d1" /></>,
};

function PButton({ icon, a, aw, b, bw, width, dim }: { icon: string; a: string; aw: number; b?: string; bw?: number; width: string; dim?: boolean }) {
  return (
    <div className={`flex shrink-0 flex-col items-center pt-[5px] text-[6.500px] leading-[8px] ${dim ? "text-[#c4c2c0]" : "text-[#555]"} ${width}`}>
      <svg width="16" height="16" viewBox="0 0 18 18" fill="none" stroke="#666" strokeWidth="1">{icons[icon]}</svg>
      <T w={aw} className="mt-px">{a}</T>
      {b && <T w={bw ?? 10}>{b}</T>}
    </div>
  );
}

function PGroup({ label, lw, width, pad, children }: { label: string; lw: number; width: string; pad: string; children?: ReactNode }) {
  return (
    <div className={`flex h-[47px] shrink-0 flex-col border-r border-[#dedcda] ${width}`}>
      <div className={`flex h-[39.500px] ${pad}`}>{children}</div>
      <div className="flex justify-center text-[5.500px] leading-[8px] text-[#666]"><T w={lw}>{label}</T></div>
    </div>
  );
}

function PRibbon() {
  return (
    <div className="flex h-[48px] border-b border-[#e1dfdd] bg-[#fafafa]">
      <PGroup label="Clipboard" lw={22} width="w-[83px]" pad="pl-[8px]">
        <div className="flex w-[18px] flex-col pt-[5px] text-[6.500px] leading-[8px] text-[#c4c2c0]">
          <svg width="16" height="16" viewBox="0 0 18 18" fill="none" stroke="#e5c898"><path d="M2 3h11v13H2zM5 1h5v3H5z" /><path d="M8 7h8v10H8z" fill="#fff" stroke="#ccc" /></svg>
          <T w={14} className="mt-px">Paste</T>
        </div>
        <div className="ml-[2px] flex flex-col pt-[3px] text-[6.500px] leading-[12px] text-[#c0bebc]">
          <div className="flex items-center gap-[3px]"><svg width="8" height="8" viewBox="0 0 8 8" fill="none" stroke="#b8b6b4"><path d="M2 0l3 6M6 0L3 6" /><circle cx="2" cy="7" r="1" /><circle cx="6" cy="7" r="1" /></svg><T w={9}>Cut</T></div>
          <div className="flex items-center gap-[3px]"><svg width="8" height="8" viewBox="0 0 8 8" fill="none" stroke="#b8b6b4"><path d="M.5.5h4v6h-4zM3 2.500h4v5H3z" /></svg><T w={14}>Copy</T></div>
          <div className="flex items-center gap-[3px]"><svg width="8" height="8" viewBox="0 0 8 8"><path d="M0 3l4-1 2 3-3 3zM4 2l3-2 1 1-2 3z" fill="#ecd2a6" /></svg><T w={39}>Format painter</T></div>
        </div>
      </PGroup>
      <PGroup label="Data" lw={11} width="w-[193px]" pad="pl-[3px]">
        <PButton width="w-[22px]" icon="get" a="Get" aw={10} b="data⌄" bw={16} />
        <PButton width="w-[26px]" icon="excel" a="Excel" aw={13} b="workbook" bw={27} />
        <PButton width="w-[42px]" icon="lake" a="OneLake data" aw={37} b="hub⌄" bw={15} />
        <PButton width="w-[16px]" icon="sql" a="SQL" aw={11} b="Server" bw={17} />
        <PButton width="w-[25px]" icon="enter" a="Enter" aw={14} b="data" bw={12} />
        <PButton width="w-[24px]" icon="verse" a="Dataverse" aw={27} />
        <PButton width="w-[32px]" icon="recent" a="Recent" aw={18} b="sources⌄" bw={25} />
      </PGroup>
      <PGroup label="Queries" lw={17} width="w-[59px]" pad="pl-[6px]">
        <PButton width="w-[24px]" icon="trans" a="Transform" aw={26} b="data⌄" bw={16} />
        <PButton width="w-[26px]" icon="refresh" a="Refresh" aw={19} />
      </PGroup>
      <PGroup label="Insert" lw={13} width="w-[75px]" pad="pl-[4px]">
        <PButton width="w-[20px]" icon="nv" a="New" aw={12} b="visual" bw={15} />
        <PButton width="w-[20px]" icon="tb" a="Text" aw={11} b="box" bw={10} />
        <PButton width="w-[26px]" icon="more" a="More" aw={14} b="visuals⌄" bw={22} />
      </PGroup>
      <PGroup label="Calculations" lw={27} width="w-[58px]" pad="pl-[3px]">
        <PButton width="w-[25px]" icon="calc" a="New" aw={12} b="measure" bw={23} />
        <PButton width="w-[25px]" icon="quick" a="Quick" aw={15} b="measure" bw={23} />
      </PGroup>
      <PGroup label="Sensitivity" lw={23} width="w-[37px]" pad="pl-[0px]">
        <PButton width="w-[36px]" icon="sens" a="Sensitivity" aw={27} b="⌄" bw={3} dim />
      </PGroup>
      <PGroup label="Share" lw={13} width="w-[30px]" pad="pl-[0px]">
        <PButton width="w-[29px]" icon="pub" a="Publish" aw={19} />
      </PGroup>
      <svg className="ml-auto mr-px mt-[40px]" width="5" height="4" fill="none" stroke="#333"><path d="M.5 3.500l2-2 2 2" /></svg>
    </div>
  );
}

function ColumnChart() {
  const bars: [number, number, string, string][] = [
    [481, 472.500, "Kids Bikes", ""], [502, 471.500, "BMX", "Bikes"], [522.500, 469.500, "Hybrid", "Bikes"], [543.500, 458.500, "E-Bikes", ""],
    [564, 442, "Touring", "Bikes"], [585, 426.500, "Road", "Bikes"], [605, 416.500, "Mountain", "Bikes"],
  ];
  return (
    <svg width="202" height="126" viewBox="444 392 202 126" fontFamily="Noto Sans">
      <g fontSize="6" fill="#444" fontWeight="600">
        <text x="452.500" y="398.500" textLength="164" lengthAdjust="spacingAndGlyphs">Sum of Order Total, Sum of Order Quantity and Sum of Product</text>
        <text x="452.500" y="405.500" textLength="73" lengthAdjust="spacingAndGlyphs">Weight by Product Category</text>
      </g>
      <g fontSize="4.500" fill="#999">
        {[["$60K", 422], ["$40K", 440], ["$20K", 457.500], ["$0K", 475]].map(([t, y]) => <text key={t} x="469.500" y={y} textAnchor="end" textLength={t === "$0K" ? 7 : 9} lengthAdjust="spacingAndGlyphs">{t}</text>)}
        {bars.map(([x, , a, b]) => <g key={x} textAnchor="middle"><text x={x + 8.300} y="482" textLength={a === "Mountain" || a === "Kids Bikes" ? 18.500 : undefined} lengthAdjust="spacingAndGlyphs">{a}</text><text x={x + 8.300} y="487.800">{b}</text></g>)}
      </g>
      {bars.map(([x, y]) => <rect key={x} x={x} y={y} width="16.500" height={473.500 - y} fill="#2b3467" />)}
      <text transform="translate(457.500 463) rotate(-90)" fontSize="5.500" fill="#444" textLength="42" lengthAdjust="spacingAndGlyphs">Sum of Order Total</text>
      <text x="532" y="493.500" fontSize="5.500" fill="#444" textLength="40" lengthAdjust="spacingAndGlyphs">Product Category</text>
    </svg>
  );
}

function LineChart() {
  return (
    <svg width="202" height="122" viewBox="444 518 202 122" fontFamily="Noto Sans">
      <text x="446.500" y="526" fontSize="6" fontWeight="600" fill="#444" textLength="86" lengthAdjust="spacingAndGlyphs">Sum of Order Total by OrderDate</text>
      <g fontSize="4.500" fill="#999">
        {[["$20K", 534], ["$15K", 557.500], ["$10K", 581.500], ["$5K", 605], ["$0K", 629]].map(([t, y]) => <text key={t} x="463.500" y={y} textAnchor="end" textLength={t === "$5K" || t === "$0K" ? 7 : 9} lengthAdjust="spacingAndGlyphs">{t}</text>)}
        <text x="471.500" y="633" textLength="17.500">Feb 2023</text><text x="537.500" y="633" textLength="18">Mar 2023</text><text x="611" y="633" textLength="17.500">Apr 2023</text>
      </g>
      <path d="M470 616l2.500 3.500 5-9.500 2.500 7 4.500-15 2.500-29.500 3 33 1.500 14 2.500-13 5-1.500 2.500 16 2-18 3 .5 2.500 15.500 2-13.500 7 13 2.500-13 4.500 9.500 2.500 0 2.500 4.500 2.500-19.500 4.500 17 5-9 13.500-20 2.500 4.500 2.500 23.500 2-23 2.500 20 7.500 5.500 9-39.500 4.500 37 2.500 4 3-67.500 2 63 2.500-16 2 11 7.500 14 2 1 2.500-5 5 3 9.500-14 2.500 5.500 5-21" fill="none" stroke="#5ba53d" strokeWidth="1.300" />
      <text transform="translate(451.500 600) rotate(-90)" fontSize="5.500" fill="#444" textLength="42" lengthAdjust="spacingAndGlyphs">Sum of Order Total</text>
      <text x="539" y="639.500" fontSize="5.500" fill="#444" textLength="24" lengthAdjust="spacingAndGlyphs">OrderDate</text>
    </svg>
  );
}

const orders: [string, string, string, string, string][] = [
  ["1", "Adventurer 1000", "1", "Processing", "$3,000"],
  ["2", "Adventurer 2000", "2", "Shipped", "$3,600"],
  ["1", "AeroSpeed 1000", "1", "Cancelled", "$8,400"],
  ["1", "AeroSpeed 2000", "1", "Shipped", "$3,200"],
  ["1", "CommutePro 1000", "1", "Shipped", "$2,400"],
  ["1", "CommutePro 2000", "1", "Processing", "$1,500"],
  ["1", "CrossRider 1000", "1", "Cancelled", "$5,700"],
  ["1", "CrossRider 2000", "1", "Shipped", "$2,200"],
  ["1", "DownhillDominator 1000", "1", "Shipped", "$5,800"],
  ["1", "DownhillDominator 2000", "1", "Processing", "$3,300"],
];

function OrdersTable() {
  const cols = "grid grid-cols-[44px_54px_43px_33px_40px] items-center";
  return (
    <div className="ml-[27px] flex w-[219px] text-[5.300px] text-[#555]">
      <div className="w-[214px] pt-[1px]">
        <div className={`${cols} h-[14px] border-b border-[#b5d8a8]`}>
          <div className="text-right"><T w={41}>Count of Product ID</T></div><div className="pl-[3px]"><T w={30}>Product Name</T></div><div className="text-right"><T w={37}>Count of Order ID</T></div><div className="pl-[4px]"><T w={26}>Order Status</T></div><div className="text-right"><T w={39}>Sum of Order Total</T></div>
        </div>
        {orders.map((r) => (
          <div key={r[1]} className={`${cols} h-[8.400px] border-b border-[#eee] text-[#333]`}>
            <div className="pr-[1px] text-right">{r[0]}</div>
            <div className="pl-[3px]"><T w={Math.min(53, r[1].length * 2.400)}>{r[1]}</T></div>
            <div className="text-right">{r[2]}</div>
            <div className="pl-[4px]"><T w={r[3].length * 2.350}>{r[3]}</T></div>
            <div className="text-right"><T w={14}>{r[4]}</T></div>
          </div>
        ))}
        <div className={`${cols} h-[8px] border-t border-[#b5d8a8] font-bold text-[#333]`}>
          <div className="text-right"><T w={5}>58</T></div><div /><div className="text-right"><T w={5}>58</T></div><div /><div className="text-right"><T w={19}>$173,700</T></div>
        </div>
      </div>
      <div className="ml-[5px] mt-[4px] h-[20px] w-[2.500px] shrink-0 rounded bg-[#b5b5b5]" />
    </div>
  );
}

function Cards() {
  return (
    <div className="flex w-[102px] flex-col text-[6px] text-[#444]">
      <T w={86} className="ml-[6px] mt-[2px] h-[8px] font-medium leading-[8px]">Sum of Order Total by OrderDate</T>
      <div className="relative ml-[6px] h-[38px] w-[94px]">
        <svg className="absolute inset-0" width="94" height="38" viewBox="0 0 94 38"><path d="M0 38V33.500L2.500 35 5 30 7.500 33 11 11 14 31 16 34 18.500 27 21 26 24 33 27 27 30 31 34 32 38 28 41 33 44 31 47 33 49.500 27 54 32 57 34 60 30 63 27 66 31 68 34 70 31 72 1.500 75 33 76.500 24 80 37 82 38M84 38l2-2 3 0 3-6 1 3 1-11V38z" fill="#dedede" /></svg>
        <div className="absolute left-[24px] top-[9px] text-[18px] leading-[22px] text-[#222]"><T w={46}>$6.8K</T></div>
      </div>
      <T w={92} className="ml-[6px] mt-[2px] leading-[8px]">Count of Customer ID by OrderDate</T>
      <div className="ml-[43px] mt-[5px] h-[22px] text-[18px] leading-[22px] text-[#222]"><T w={19}>48</T></div>
      <T w={70} className="ml-[8px] mt-[2px] leading-[8px]">Count of City by OrderDate</T>
      <div className="ml-[43px] mt-[6px] h-[22px] text-[18px] leading-[22px] text-[#222]"><T w={19}>48</T></div>
    </div>
  );
}

function QnA() {
  return (
    <div className="flex flex-col">
      <div className="mt-[5px] flex items-start">
        <div className="ml-[2px] flex h-[17px] w-[123px] gap-[3px] border border-[#ccc] pl-[4px] pt-[2px] text-[5.300px] leading-[6px] text-[#444]">
          <svg className="mt-px" width="5" height="5" fill="none" stroke="#888" strokeWidth=".6"><path d="M.5.5h4v3h-2l-1 1v-1h-1z" /></svg>
          <div className="flex flex-col">
            <div className="flex gap-[2px]"><T w={15}>Bottom</T><T w={36} className="border-b border-[#6cb4e4]">product category</T><T w={5}>of</T><T w={10} className="border-b border-[#6cb4e4]">sales</T><T w={15}>by total</T></div>
            <div className="flex gap-[2px]"><T w={23} className="border-b border-[#6cb4e4]">order total</T><T w={5}>as</T><T w={48} className="border-b border-[#6cb4e4]">clustered column chart</T></div>
          </div>
        </div>
        <svg className="ml-[3px] mt-[2px]" width="14" height="6" fill="none" stroke="#999" strokeWidth=".8"><path d="M.5 3h3V1h2v3h-3z" /><circle cx="10" cy="3" r="2" /><circle cx="10" cy="3" r=".6" /></svg>
      </div>
      <svg width="144" height="111" viewBox="748 529 144 111" fontFamily="Noto Sans">
        <circle cx="886.500" cy="533.800" r="2.300" fill="none" stroke="#999" strokeWidth=".7" /><path d="M886.500 533v2" stroke="#999" strokeWidth=".7" />
        <rect x="815" y="541" width="24" height="70.500" fill="#5ba53d" />
        <g fontSize="4.500" fill="#999" textAnchor="end"><text x="767.500" y="557.500">$400</text><text x="767.500" y="585.500">$200</text><text x="767.500" y="613">$0</text></g>
        <text x="827.500" y="617.800" fontSize="4.500" fill="#999" textAnchor="middle">Kids Bikes</text>
        <text x="808" y="624" fontSize="5.500" fill="#444" textLength="39" lengthAdjust="spacingAndGlyphs">Product Category</text>
        <text transform="translate(755 597) rotate(-90)" fontSize="5.500" fill="#444" textLength="42" lengthAdjust="spacingAndGlyphs">Sum of Order Total</text>
      </svg>
    </div>
  );
}

const B = "#2f8fd8";
const ax = <path d="M1.500 0v10.500H12" stroke="#555" />;
const vizIcons: ReactNode[] = [
  <>{ax}<path d="M3 2h4v2H3zM3 5h6v2H3z" fill="#777" /><path d="M3 8h7v2H3z" fill={B} /></>,
  <>{ax}<path d="M3 6h2v4H3zM9 3h2v7H9z" fill="#999" /><path d="M6 2h2v8H6z" fill={B} /></>,
  <>{ax}<path d="M2 1h10v2H2z" fill="#555" /><path d="M2 4h6v2H2zM2 7h8v2H2z" fill={B} /></>,
  <>{ax}<path d="M3 1h3v9H3z" fill="#555" /><path d="M6 4h3v6H6zM9 6h2v4H9z" fill={B} /></>,
  <>{ax}<path d="M3 1h9v2H3zM3 7h9v2H3z" fill="#999" /><path d="M3 4h9v2H3z" fill={B} /></>,
  <>{ax}<path d="M3 1h2v9H3zM10 1h2v9h-2z" fill="#999" /><path d="M6 1h3v9H6z" fill={B} /></>,
  <>{ax}<path d="M2 8l3-4 3 2 4-4" stroke={B} /><path d="M2 5l3 3 3-3 4 1" stroke="#555" /></>,
  <><path d="M1 11l4-7 3 7z" fill={B} /><path d="M4 8l4-6 4 9H6" stroke="#777" /></>,
  <>{ax}<path d="M2 4l3 3 3-3 4 4v3l-4-2-3 2-3-3z" fill={B} /></>,
  <>{ax}<path d="M3 4h2v6H3zM9 3h2v7H9z" fill="#777" /><path d="M6 5h2v5H6z" fill={B} /><path d="M2 4l4-2 6 4" stroke="#555" /></>,
  <>{ax}<path d="M3 6h2v4H3zM6 3h2v7H6z" fill={B} /><path d="M2 7l4-3 6 4" stroke="#555" /></>,
  <><path d="M1 1v10h11V3L8 8z" fill={B} /><path d="M2 2l5 6 5-6v4L7 11 2 6z" fill="#e0862a" /></>,
  <>{ax}<path d="M3 4h2v6H3zM9 1h2v9H9z" fill="#777" /><path d="M6 2h2v5H6z" fill={B} /></>,
  <><path d="M1 1h11v2H1zM2 4h9v3H2zM4 8h5v3H4z" fill={B} stroke="#777" strokeWidth=".4" /></>,
  <>{ax}<path d="M4 3h1v1H4zM9 2h1v1H9zM7 8h1v1H7z" stroke="#555" /><path d="M5 6h1v1H5zM9 6h1v1H9z" stroke={B} /></>,
  <><circle cx="6" cy="6" r="5" stroke="#777" /><path d="M6 1a5 5 0 0 1 3 9L6 6z" fill={B} /></>,
  <><circle cx="6" cy="6" r="3.800" stroke={B} strokeWidth="2.800" /><path d="M6 1a5 5 0 0 0-5 5" stroke="#666" /></>,
  <><path d="M.5.5h4v10h-4zM5.500.5h6v5h-6zM5.500 6.500h3v4h-3zM9 6.500h3v4H9z" fill="#9ccbf0" stroke={B} /></>,
  <><circle cx="6" cy="6" r="4.500" stroke="#666" /><path d="M3 3h5v5l-3 2z" fill="#3c8d4a" /></>,
  <><path d="M1 2l5 2 5-2v5l-4 4-5-2z" fill={B} stroke="#777" /><circle cx="8" cy="4" r="2" fill="#ddd" /></>,
  <><path d="M7 0l4 11-4-3-6 3z" fill={B} /></>,
  <><path d="M1 9a5 5 0 0 1 10 0" stroke={B} strokeWidth="2.500" /><path d="M6 9l3-3" stroke="#444" /></>,
  <><path d="M.5 2.500h11v7H.5z" stroke="#777" /><text x="6" y="8" textAnchor="middle" fontSize="5" fill={B} stroke="none">123</text></>,
  <><path d="M.5 1.500h11v9H.5z" stroke="#777" /><path d="M3 4h6M3 8h4" stroke={B} /></>,
  <><path d="M.5 1.500h11v9H.5z" stroke="#777" /><path d="M2 7l2-3 2 3z" fill="#3c8d4a" /><path d="M6 4h4L8 7z" fill="#d33" /></>,
  <><path d="M.5 1h10v8H.5zM.5 3h10M4 3v6M6 6h5l-2 3v3z" stroke="#777" /></>,
  <><path d="M1 1h10v10H1zM1 4h10M1 7h10M4 1v10M8 1v10" stroke="#777" /></>,
  <><path d="M1 1h10v10H1zM1 4h10M1 7h10M4 1v10M8 1v10" stroke="#777" /><path d="M4 7h7v4H4z" fill={B} /></>,
  <text x="6" y="10" textAnchor="middle" fontSize="11" fontWeight="700" fill={B}>R</text>,
  <text x="6" y="9" textAnchor="middle" fontSize="10" fontWeight="700" fill={B}>Py</text>,
  <>{ax}<path d="M3 3h3M3 6h6M3 9h3" stroke="#777" /><circle cx="10" cy="3" r="1.500" fill={B} /></>,
  <><path d="M0 4h4v4H0zM6 0h4v3H6zM6 5h4v3H6zM6 9h4v3H6z" fill={B} /><path d="M4 6h2M5 1v9" stroke={B} /></>,
  <><path d="M1 1h10v8H6l-3 3V9H1z" stroke={B} /></>,
  <><path d="M2 1h6l3 3v8H2z" stroke="#777" /><path d="M5 8h3v3" stroke={B} /></>,
  <><path d="M3 1h6v5c0 3-6 3-6 0zM1 2h2M9 2h2M6 8v3M3 11.500h6" stroke="#555" /><path d="M4 3h4v3H4z" fill={B} /></>,
  <><path d="M2 1h5l3 3v8H2z" stroke="#444" strokeWidth="1.300" /><path d="M5 11V7h2v4zM8 11V5h2v6z" fill="#444" /></>,
  <><path d="M2 3h10v8H2z" stroke="#777" /><path d="M0 0h4L2 4h2L0 8z" fill="#f08a24" /><path d="M5 9V6M8 9V5" stroke={B} /></>,
  <><path d="M2 2h9v8H2zM2 5h9M6 7h5l-2 4z" stroke="#777" /><path d="M0 0h4L2 4h2L0 8z" fill="#f08a24" /></>,
  <><path d="M1 1h4v10H1zM5 7h3v4H5z" fill="#f08a24" /><path d="M5 1h7v6H5zM9 8h3v3H9z" fill={B} /><path d="M3 10l6-6" stroke="#fff" /></>,
  <><path d="M6 .5L11.500 6 6 11.500.5 6zM6 3L9 6 6 9 3 6z" stroke="#a04aa8" /></>,
  <><path d="M1 2h3l4 4-4 4H1l4-4zM6 2h2l4 4-4 4H6l4-4z" stroke={B} /></>,
  <path d="M1 6h1.500M5.500 6H7M10 6h1.500" stroke="#666" strokeWidth="1.500" />,
];

function VizPane() {
  return (
    <div className="flex w-[91px] shrink-0 flex-col border-l border-[#e1dfdd] bg-[#f3f2f1] text-[6.500px] text-[#444]">
      <div className="flex h-[18px] items-center justify-between pl-[3px] pr-[4px] text-[8.500px] font-semibold text-[#333]"><T w={50}>Visualizations</T><Chev /></div>
      <T w={32} className="ml-[3px] h-[9px] font-semibold leading-[9px]">Build visual</T>
      <div className="flex h-[24px] items-start border-b border-[#c8c6c4] pl-[3px]">
        <div className="flex size-[16px] flex-col items-center justify-center gap-[1px] bg-[#d2d0ce]"><div className="h-px w-[12px] bg-[#555]" /><div className="h-[4px] w-[12px] bg-[#117865]" /><div className="h-[4px] w-[12px] bg-[#117865]" /></div>
        <svg className="ml-[19px] mt-[2px]" width="14" height="14" viewBox="0 0 14 14" fill="none" stroke="#555"><path d="M7 12.500H1.500V1h4l4 4v1M5.500 1v4h4M6 12l6-6 1 1-6 6z" /></svg>
      </div>
      <div className="ml-[2px] mt-[3px] grid w-[85px] grid-cols-6">
        {vizIcons.map((ic, i) => (
          <div key={i} className="flex h-[14.080px] items-center justify-center"><svg width="10.500" height="10.500" viewBox="0 0 12 12" fill="none" fontFamily="Noto Sans">{ic}</svg></div>
        ))}
      </div>
      <div className="border-t border-[#ddd] pl-[5px] pt-[5px] leading-[8px]"><T w={17} className="h-[8px]">Values</T></div>
      <div className="ml-[1px] mt-[3px] flex h-[14px] w-[87px] items-center border border-dashed border-[#ccc] bg-white pl-[5px]"><T w={54}>Add data fields here</T></div>
      <T w={35} className="ml-[5px] mt-[4.500px] h-[9px] leading-[9px]">Drill through</T>
      <div className="mt-[3px] flex h-[11px] items-center justify-between pl-[5px] pr-[11px]"><T w={34}>Cross-report</T><div className="flex h-[8px] w-[16px] items-center gap-px rounded-full border border-[#666] pl-[2px] text-[5px]"><div className="size-[3px] rounded-full bg-[#555]" /><T w={7}>Off</T></div></div>
      <div className="mt-[3px] flex h-[11px] items-center justify-between pl-[5px] pr-[11px]"><T w={38}>Keep all filters</T><div className="flex h-[8px] w-[16px] items-center justify-between rounded-full bg-[#117865] px-[2px] text-[5px] text-white"><T w={6}>On</T><div className="size-[4px] rounded-full bg-white" /></div></div>
      <div className="ml-[1px] mt-[3px] flex h-[14px] w-[87px] items-center border border-dashed border-[#ccc] bg-white pl-[4px]"><T w={76}>Add drill-through fields here</T></div>
    </div>
  );
}

const Chev = ({ left }: { left?: boolean }) => (
  <svg width="7" height="6" viewBox="0 0 7 6" fill="none" stroke="#444" strokeWidth=".9" className={left ? "rotate-180" : ""}><path d="M.5.5L3 3 .5 5.500M3.500.5L6 3 3.500 5.500" /></svg>
);

function DataPane() {
  return (
    <div className="flex w-[90px] shrink-0 flex-col border-l border-[#e1dfdd] bg-[#f3f2f1] text-[6.500px] text-[#555]">
      <div className="flex h-[18px] items-center justify-between pl-[4px] pr-[2px] text-[8.500px] font-semibold text-[#333]"><T w={17}>Data</T><Chev /></div>
      <div className="ml-[2px] mt-[4px] flex h-[14px] w-[87px] items-center gap-[3px] border border-[#aaa] bg-white/40 pl-[4px] text-[7px]">
        <svg width="7" height="7" viewBox="0 0 7 7" fill="none" stroke="#777" strokeWidth=".8"><circle cx="4.300" cy="2.700" r="2.200" /><path d="M2.500 4.500L.5 6.500" /></svg><T w={21}>Search</T>
      </div>
      {["Customers", "Sales"].map((t, i) => (
        <div key={t} className={`flex h-[12px] items-center pl-[4px] ${i === 0 ? "mt-[4px]" : ""}`}>
          <svg width="4" height="6" fill="none" stroke="#777" strokeWidth=".8"><path d="M.5.5L3 3 .5 5.500" /></svg>
          <svg className="ml-[3px] mr-[3px]" width="7" height="7" viewBox="0 0 7 7" fill="none" stroke="#555" strokeWidth=".8"><rect x=".5" y=".5" width="6" height="6" rx="1" /><path d="M.5 2.500h6M.5 4.500h6M3.500 .5v6" /></svg>
          <T w={i === 0 ? 29 : 14}>{t}</T>
        </div>
      ))}
    </div>
  );
}

const pTabs: [string, number, string][] = [["Insert", 17, "ml-[16px]"], ["Modeling", 30, "ml-[16px]"], ["View", 15, "ml-[16px]"], ["Optimize", 29, "ml-[15px]"], ["Help", 15, "ml-[15px]"]];

function ReportWindow() {
  return (
    <div className="flex h-[387px] w-[689px] flex-col overflow-hidden bg-white">
      <div className="flex h-[17px] items-center bg-[#3b3a39] text-[6px] text-white">
        <svg className="ml-[10px]" width="40" height="8" viewBox="0 0 40 8" fill="none" stroke="#c8c6c4"><path d="M.5.5h7v7h-7zM2 .5v2h4v-2M2 7.500v-3h4v3M17 .5v3h3M17 3c2-3 6-2 6 1 0 2-2 3-3 4" /><path d="M38 .5v3h-3M38 3c-2-3-6-2-6 1 0 2 2 3 3 4" stroke="#777" /></svg>
        <div className="ml-[3px] pt-[3px]"><T w={113}>201402018 • Last saved: Today at 9:05 AM</T></div>
        <svg className="ml-[3px]" width="4" height="3"><path d="M0 0h4L2 3z" fill="#fff" /></svg>
        <div className="ml-[111px] flex h-[13px] w-[203px] items-center gap-[5px] bg-[#d2d0ce] pl-[9px] text-[7px] text-[#2c6a60]"><svg width="9" height="8" viewBox="0 0 9 8" fill="none" stroke="#555"><circle cx="5.500" cy="3" r="2.500" /><path d="M3.500 5L.5 7.500" /></svg><T w={21}>Search</T></div>
        <div className="ml-[96px]"><T w={18}>Sign in</T></div>
        <svg className="ml-[5px]" width="11" height="11" viewBox="0 0 11 11"><circle cx="5.500" cy="5.500" r="5.200" fill="#eee" /><circle cx="5.500" cy="3.800" r="1.600" fill="none" stroke="#333" /><path d="M2.500 8.500c0-4 6-4 6 0z" fill="none" stroke="#333" /></svg>
        <svg className="ml-[14px]" width="52" height="6" viewBox="0 0 52 6" fill="none" stroke="#ddd" strokeWidth=".9"><path d="M1 3h6M24 1.500h3.500V5H24zM25 1.500V.5h3.500V4h-1M46 .5l5 5M51 .5l-5 5" /></svg>
      </div>
      <div className="flex h-[17px] items-start bg-[#fafafa] pt-[2px] text-[7px] text-[#444]">
        <T w={11} className="ml-[13px] leading-[13px]">File</T>
        <div className="ml-[18px] flex flex-col border-b-2 border-[#117865] font-bold"><T w={20} className="leading-[12px]">Home</T></div>
        {pTabs.map(([t, w, m]) => <T key={t} w={w} className={`leading-[13px] ${m}`}>{t}</T>)}
        <div className="ml-auto mr-[2px] flex h-[12px] w-[42px] items-center rounded-[2px] bg-[#117865] pl-[3px] text-[6px] text-white">
          <svg className="mr-[4px]" width="8" height="7" viewBox="0 0 8 7" fill="none" stroke="#fff" strokeWidth=".9"><path d="M3 1.500H.5v5h6V4M2.500 4.500c0-2 1-2.500 3-2.500M4.500.5L7 2 5 3.500" /></svg><T w={14}>Share</T><svg className="ml-[3px]" width="5" height="3" fill="none" stroke="#fff"><path d="M.5.5l2 2 2-2" /></svg>
        </div>
      </div>
      <PRibbon />
      <div className="flex h-[268px]">
        <div className="flex w-[508px] flex-col">
          <div className="flex h-[251px]">
            <div className="flex w-[23px] flex-col items-center border-r border-[#e6e4e2] bg-[#f3f2f1]">
              <div className="flex h-[20px] w-full items-center border-l-2 border-[#117865] pl-[6px]"><svg width="8" height="8" viewBox="0 0 8 8"><path d="M0 0h1v8H0zM1.500 3h1.500v5H1.500zM3.500 4.500H5V8H3.500zM5.500 1H7v7H5.500z" fill="#333" /></svg></div>
              <svg className="mt-[5px]" width="8" height="8" viewBox="0 0 8 8" fill="none" stroke="#777" strokeWidth=".8"><path d="M.5.5h7v7h-7zM.5 3h7M.5 5.500h7M3 .5v7M5.500.5v7" /></svg>
              <svg className="mt-[12px]" width="10" height="10" viewBox="0 0 10 10" fill="none" stroke="#777" strokeWidth=".8"><path d="M0 3h4v3H0zM6 .5h3.500v3H6zM6 5.500h3.500v3.500H6zM4 4l2-2M4 5l2 2" /></svg>
            </div>
            <div className="flex w-[463px] pl-[3px] pt-[2px]">
              <div className="flex w-[455px] border-x border-t border-dotted border-[#444]">
                <div className="flex w-[202px] flex-col"><ColumnChart /><LineChart /></div>
                <div className="flex w-[250px] flex-col">
                  <div className="h-[117px]"><OrdersTable /></div>
                  <div className="flex"><Cards /><QnA /></div>
                </div>
              </div>
            </div>
            <div className="h-[245px] w-[4px] rounded-b bg-[#c8c6c4]" />
            <div className="ml-[2px] flex w-[16px] flex-col items-center border-l border-[#ccc] pt-[6px]">
              <Chev left />
              <svg className="mt-[8px]" width="7" height="7" viewBox="0 0 7 7" fill="none" stroke="#444" strokeWidth=".9"><path d="M6.500.5v6L3.500 4H.5V3h3z" /></svg>
              <div className="mt-[3px] text-[7.200px] font-semibold leading-[9px] text-[#333] [writing-mode:vertical-rl]">Filters</div>
            </div>
          </div>
          <div className="flex h-[17px] items-start bg-[#f3f2f1] pl-[27px] text-[7px]">
            <svg className="mt-[3px]" width="57" height="12" viewBox="0 0 57 12" fill="none" stroke="#555"><path d="M1 .5h9v5.500H1zM5.500 6v2M3 8.500h5" /><path d="M0 11h12" stroke="#117865" strokeWidth="1.500" /><rect x="25.500" y=".5" width="6" height="9" rx="1" /><path d="M45 3l-2 2 2 2M54 3l2 2-2 2" stroke="#aaa" /></svg>
            <div className="ml-[2px] flex h-[17px] w-[39px] items-center justify-center border-b-2 border-[#117865] bg-white font-semibold text-[#333]"><T w={18}>Page 1</T></div>
            <div className="flex h-[17px] w-[20px] items-center justify-center bg-[#117865] text-[10px] font-bold text-white">+</div>
          </div>
        </div>
        <VizPane />
        <DataPane />
      </div>
      <div className="flex h-[12px] items-center border-t border-[#e1dfdd] bg-[#f3f2f1] pl-[4px] text-[6.500px] text-[#555]">
        <T w={30}>Page 1 of 1</T>
        <svg className="ml-auto" width="62" height="7" viewBox="0 0 62 7" stroke="#555" fill="none"><path d="M0 3.500h2M5 3.500h50M58 3.500h4M60 1.500v4" strokeWidth=".8" /><path d="M21 .5v6" strokeWidth="1.600" /></svg>
        <T w={12} className="ml-[9px]">70%</T>
        <svg className="ml-[8px] mr-[7px]" width="9" height="7" fill="none" stroke="#555"><path d="M.5 2V.5H3M6 .5h2.500V2M8.500 5v1.500H6M3 6.500H.5V5M2.500 2.500h4v2h-4z" strokeWidth=".8" /></svg>
      </div>
      <MiniTaskbar />
    </div>
  );
}

/* ---------- Document ---------- */

function Page() {
  return (
    <div className="h-[531px] w-[901px] overflow-hidden border-x border-[#9a9a9a] bg-white pl-[105px] text-black">
      <div className="-mt-[10px] font-['Liberation_Serif'] text-[16px] leading-[18px]">
        {[["Nama", ": Warida Halim Hasibuan", 162], ["Nim", ": 201402018", 81], ["Kom", ": C", 19]].map(([a, b, w]) => (
          <div key={a} className="flex h-[18px]"><span className="w-[53px]">{a}</span><T w={Number(w)}>{b}</T></div>
        ))}
        <div className="ml-[304px] pt-px font-bold"><T w={81} className="border-b-2 border-black !leading-[14px]">UAS DWBI</T></div>
      </div>
      <div className="mt-[17px] flex flex-col font-[Lato] text-[16.200px] leading-[23px]">
        <T w={650}>Berdasarkan analisis Anda terhadap bagan kolom, kategori produk manakah yang memiliki</T>
        <div className="flex"><T w={223}>Total Pesanan terendah adalah</T><T w={127} className="ml-[4px] font-bold">Product Category</T></div>
      </div>
      <div className="mt-[14px]"><ReportWindow /></div>
    </div>
  );
}

function StatusBar() {
  return (
    <div className="flex h-[22px] items-center bg-[#333] text-[12px] text-[#f0f0f0]">
      <T w={62} className="ml-[7px]">PAGE 1 OF 1</T>
      <T w={56} className="ml-[19px]">30 WORDS</T>
      <svg className="ml-[20px]" width="15" height="13" viewBox="0 0 15 13" fill="none" stroke="#eee"><path d="M7 12.500V2Q4 .5.5.5v10Q4 10.500 7 12.500q2-1.500 4-2V9M7 2q2-1.500 6-1.500V4M9 6l2 2.500L14 3" /></svg>
      <T w={130} className="ml-[16px]">ENGLISH (UNITED STATES)</T>
      <svg className="ml-auto" width="14" height="13" viewBox="0 0 14 13" fill="none" stroke="#eee"><path d="M.5.5H5L7 2l2-1.500h4.500v11H9L7 12.500 5 11.500H.5zM7 2v10M2 3.500h3M2 5.500h3M2 7.500h3M2 9.500h3M9 3.500h3M9 5.500h3M9 7.500h3M9 9.500h3" /></svg>
      <div className="ml-[12px] flex h-[22px] w-[38px] items-center justify-center bg-black"><svg width="14" height="13" viewBox="0 0 14 13" fill="none" stroke="#eee"><path d="M.5.5h13v12H.5zM2 2.500h10M2 4.500h10M2 6.500h10M2 8.500h10M2 10.500h10" /></svg></div>
      <svg className="ml-[12px]" width="14" height="13" viewBox="0 0 14 13" fill="none" stroke="#eee"><path d="M6 11.500H.5v-11h10V5M2 2.500h7M2 4.500h7M2 6.500h4M2 8.500h3" /><circle cx="10" cy="9" r="3.500" fill="#888" /></svg>
      <svg className="ml-[17px]" width="123" height="12" viewBox="0 0 123 12" fill="#fff"><path d="M0 5h6v2H0zM10 5.500h100v1H10zM61 0h3v12h-3zM114 5h8v2h-8zM117 2h2v8h-2z" /></svg>
      <T w={27} className="ml-[14px] mr-[9px]">110%</T>
    </div>
  );
}

export default function App() {
  return (
    <div className="flex h-[768px] w-[1366px] flex-col overflow-hidden bg-[#e4e4e4] font-['Noto_Sans',sans-serif]">
      <div className="relative h-[50px] shrink-0">
        <Circuit />
        <div className="relative"><TitleBar /><Tabs /></div>
      </div>
      <div className="flex h-[93px] shrink-0 border-b border-[#ababab] bg-[#f3f3f3]">
        <Clipboard /><FontGroup /><Paragraph /><Styles /><Editing />
        <svg className="ml-[17px] mt-[82px]" width="9" height="6" fill="none" stroke="#666" strokeWidth="1.800"><path d="M.8 5l3.700-3.700L8.200 5" /></svg>
      </div>
      <div className="flex h-[555px] shrink-0 bg-gradient-to-b from-[#e4e4e4] to-[#bebebe]">
        <NavPane />
        <div className="flex w-[22px] shrink-0 flex-col">
          <div className="flex h-[21px] w-[22px] items-center justify-center bg-[#c6c6c6]"><div className="flex h-[15px] w-[16px] items-center justify-center bg-white"><svg width="6" height="6"><path d="M0 0h2v4h4v2H0z" fill="#555" /></svg></div></div>
          <div className="ml-[5px] mt-[3px]"><VRuler /></div>
        </div>
        <div className="flex grow flex-col pl-[137px] pt-[2px]">
          <HRuler />
          <div className="ml-px"><Page /></div>
        </div>
        <div className="flex w-[16px] shrink-0 flex-col pt-[3px]">
          <div className="flex h-[14px] w-[15px] items-center justify-center border border-[#ababab] bg-white"><svg width="7" height="4"><path d="M0 4h7L3.500 0z" fill="#666" /></svg></div>
          <div className="h-[60px]" />
          <div className="h-[228px] w-[15px] border border-[#ababab] bg-white" />
          <div className="mt-auto flex h-[14px] w-[15px] items-center justify-center border border-[#ababab] bg-white"><svg width="7" height="4"><path d="M0 0h7L3.500 4z" fill="#666" /></svg></div>
        </div>
      </div>
      <StatusBar />
      <Taskbar />
    </div>
  );
}
